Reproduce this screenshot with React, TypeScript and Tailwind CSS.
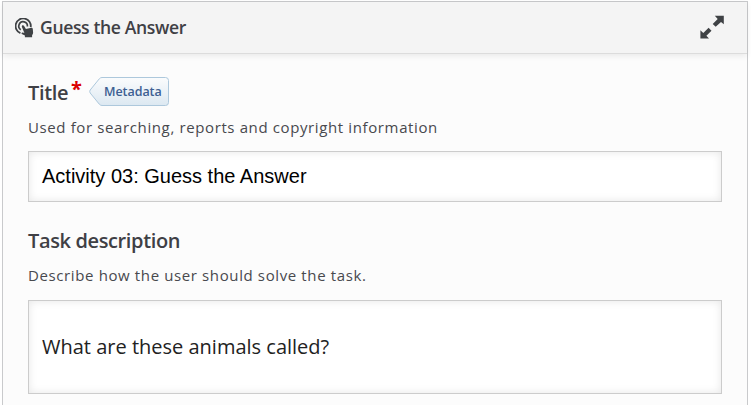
import type { ReactNode } from 'react';

function GuessIcon() {
  return (
    <svg className="h-[20px] w-[19px] shrink-0" viewBox="0 0 19 20" fill="none" stroke="#3f4245">
      <path d="M5.4 15.1A7.6 7.6 0 1 1 15.7 9.2" strokeWidth="1.8" />
      <path d="M5.8 11.7A4.3 4.3 0 1 1 12.4 8.5" strokeWidth="1.7" />
      <path
        d="M7.1 7.6c.7-.6 1.6-.4 2 .4l1.8 3 5.4-1.2c.9-.1 1.4.3 1.5 1.1l.3 3.5c0 1.5-.7 2.3-1 2.8v2H9.9v-1.6L6.8 15.9c-.7-.8.1-1.8 1.1-1.4l1.5.4L7 9.2c-.3-.6-.3-1.1.1-1.6z"
        fill="#3f4245"
        stroke="none"
      />
    </svg>
  );
}

function ExpandIcon() {
  return (
    <svg className="h-6 w-6" viewBox="0 0 24 24" fill="#3f4245">
      <path d="M14.8 .8H23.8V9.2L21 6.9L15.7 11.8L12.7 8.9L17.7 3.9Z" />
      <path d="M8.6 12.8L11.5 15.7L6.4 20.7L9 23.6H.4V15.2L3.3 18Z" />
    </svg>
  );
}

function MetadataButton() {
  return (
    <button className="relative -mt-[3px] ml-[7px] h-[29px] w-[80px] shrink-0 text-[#3d5f92]">
      <svg className="absolute inset-0 h-full w-full" viewBox="0 0 80 29">
        <defs>
          <linearGradient id="metadata-bg" x1="0" y1="0" x2="0" y2="1">
            <stop offset="0" stopColor="#fbfcfd" />
            <stop offset="1" stopColor="#dce8f1" />
          </linearGradient>
        </defs>
        <path
          d="M13 .5H76.5Q79.5 .5 79.5 3.5V25.5Q79.5 28.5 76.5 28.5H13Q11.5 28.5 10.3 27.2L1.2 16Q.2 14.5 1.2 13L10.3 1.8Q11.5 .5 13 .5Z"
          fill="url(#metadata-bg)"
          stroke="#adc8dc"
        />
      </svg>
      <span className="relative block pl-[15px] text-left text-[12.5px] leading-[27px] font-semibold tracking-[-0.05px]">
        Metadata
      </span>
    </button>
  );
}

interface FieldProps {
  label: string;
  description: string;
  required?: boolean;
  action?: ReactNode;
  children: ReactNode;
}

function Field({ label, description, required, action, children }: FieldProps) {
  return (
    <div>
      <div className="flex h-[29px] items-center">
        <span className="text-[20px] leading-[29px] font-semibold tracking-[-0.37px]">{label}</span>
        {required && <span className="-mt-[9px] ml-[3px] text-[20px] leading-[29px] font-bold text-[#da0001]">*</span>}
        {action}
      </div>
      <p className="mt-[9px] h-[22px] text-[15px] leading-[22px] tracking-[0.62px] text-[#48494e]">{description}</p>
      {children}
    </div>
  );
}

export default function App() {
  return (
    <div className="h-[405px] overflow-hidden bg-white pt-px pr-[3px] pl-[2px] font-['Open_Sans',sans-serif] text-[#3f4045]">
      <div className="h-[420px] border border-[#c9cacc] bg-[#fcfcfc]">
        <header className="flex h-[52px] items-center border-b border-[#dcdcdc] bg-[#f4f4f4] pr-[23px] pl-[12px] shadow-[0_2px_6px_rgba(0,0,0,0.08)]">
          <GuessIcon />
          <h1 className="ml-[6px] flex-1 text-[17.6px] font-semibold tracking-[-0.38px]">Guess the Answer</h1>
          <button aria-label="Fullscreen" className="-mt-[2px]">
            <ExpandIcon />
          </button>
        </header>

        <main className="pt-[24px] pr-[25px] pl-[25px]">
          <Field
            label="Title"
            description="Used for searching, reports and copyright information"
            required
            action={<MetadataButton />}
          >
            <div className="mt-[13px] flex h-[51px] items-center border border-[#cccccc] bg-white px-[13px] pb-[2px] font-['Liberation_Sans',sans-serif] text-[20px] text-black shadow-[inset_0_0_8px_rgba(0,0,0,0.1)]">
              Activity 03: Guess the Answer
            </div>
          </Field>

          <div className="mt-[24px]">
            <Field label="Task description" description="Describe how the user should solve the task.">
              <div className="mt-[14px] flex h-[94px] items-center border border-[#cccccc] bg-white px-[13px] text-[20px] text-[#222222] shadow-[inset_0_0_8px_rgba(0,0,0,0.1)]">
                What are these animals called?
              </div>
            </Field>
          </div>
        </main>
      </div>
    </div>
  );
}
